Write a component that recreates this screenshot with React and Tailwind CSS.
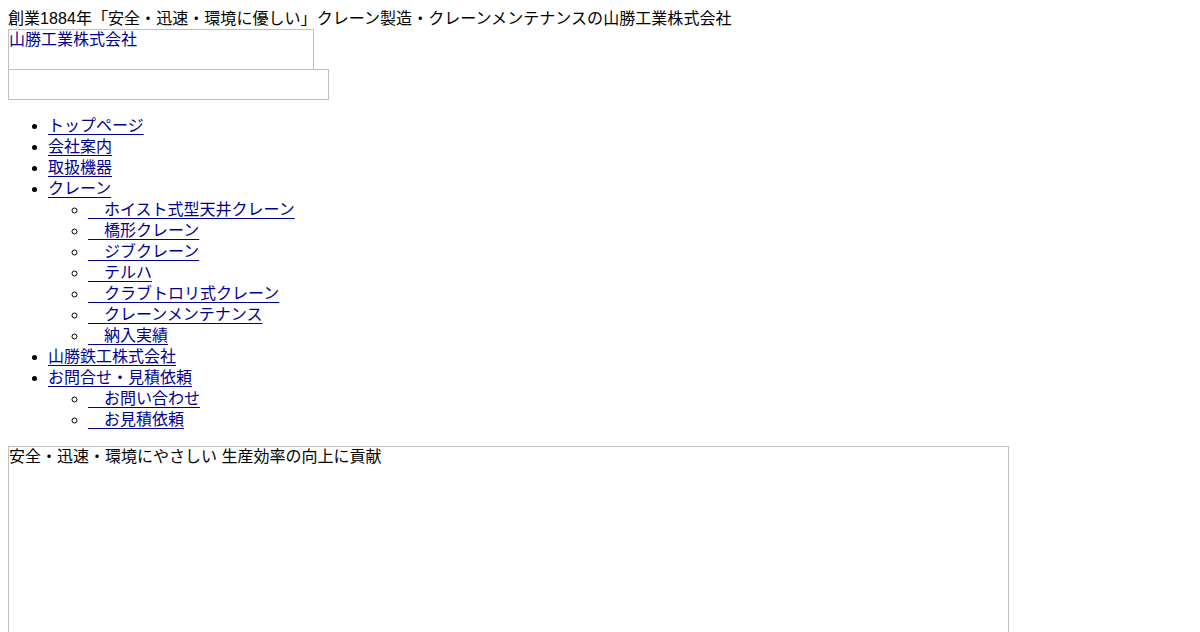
const crane = [
  'ホイスト式型天井クレーン',
  '橋形クレーン',
  'ジブクレーン',
  'テルハ',
  'クラブトロリ式クレーン',
  'クレーンメンテナンス',
  '納入実績',
];

const contact = ['お問い合わせ', 'お見積依頼'];

function Link({ children }) {
  return (
    <a href="#" className="text-[#000090] underline underline-offset-[3px]">
      {children}
    </a>
  );
}

export default function App() {
  return (
    <div className="p-2 bg-white text-black text-[16px] leading-[21px] font-['Liberation_Sans','Noto_Sans_CJK_JP',sans-serif] min-h-[632px] overflow-hidden">
      <h1 className="text-[16px] font-normal tracking-[0.05px]">
        創業1884年「安全・迅速・環境に優しい」クレーン製造・クレーンメンテナンスの山勝工業株式会社
      </h1>

      {/* broken logo + banner images */}
      <div className="w-[306px] h-[41px] border border-[#c0c0c0] text-[#000090] leading-[19px]">
        山勝工業株式会社
      </div>
      <div className="w-[321px] h-[31px] -mt-px border border-[#c0c0c0]" />

      <ul className="list-disc pl-10 mt-[15px] mb-4">
        <li><Link>トップページ</Link></li>
        <li><Link>会社案内</Link></li>
        <li><Link>取扱機器</Link></li>
        <li>
          <Link>クレーン</Link>
          <ul className="list-[circle] pl-10">
            {crane.map((c) => (
              <li key={c}><Link>{'　' + c}</Link></li>
            ))}
          </ul>
        </li>
        <li><Link>山勝鉄工株式会社</Link></li>
        <li>
          <Link>お問合せ・見積依頼</Link>
          <ul className="list-[circle] pl-10">
            {contact.map((c) => (
              <li key={c}><Link>{'　' + c}</Link></li>
            ))}
          </ul>
        </li>
      </ul>

      <div className="w-[1001px] h-[300px] border border-[#c0c0c0] leading-[19px]">
        安全・迅速・環境にやさしい 生産効率の向上に貢献
      </div>
    </div>
  );
}
